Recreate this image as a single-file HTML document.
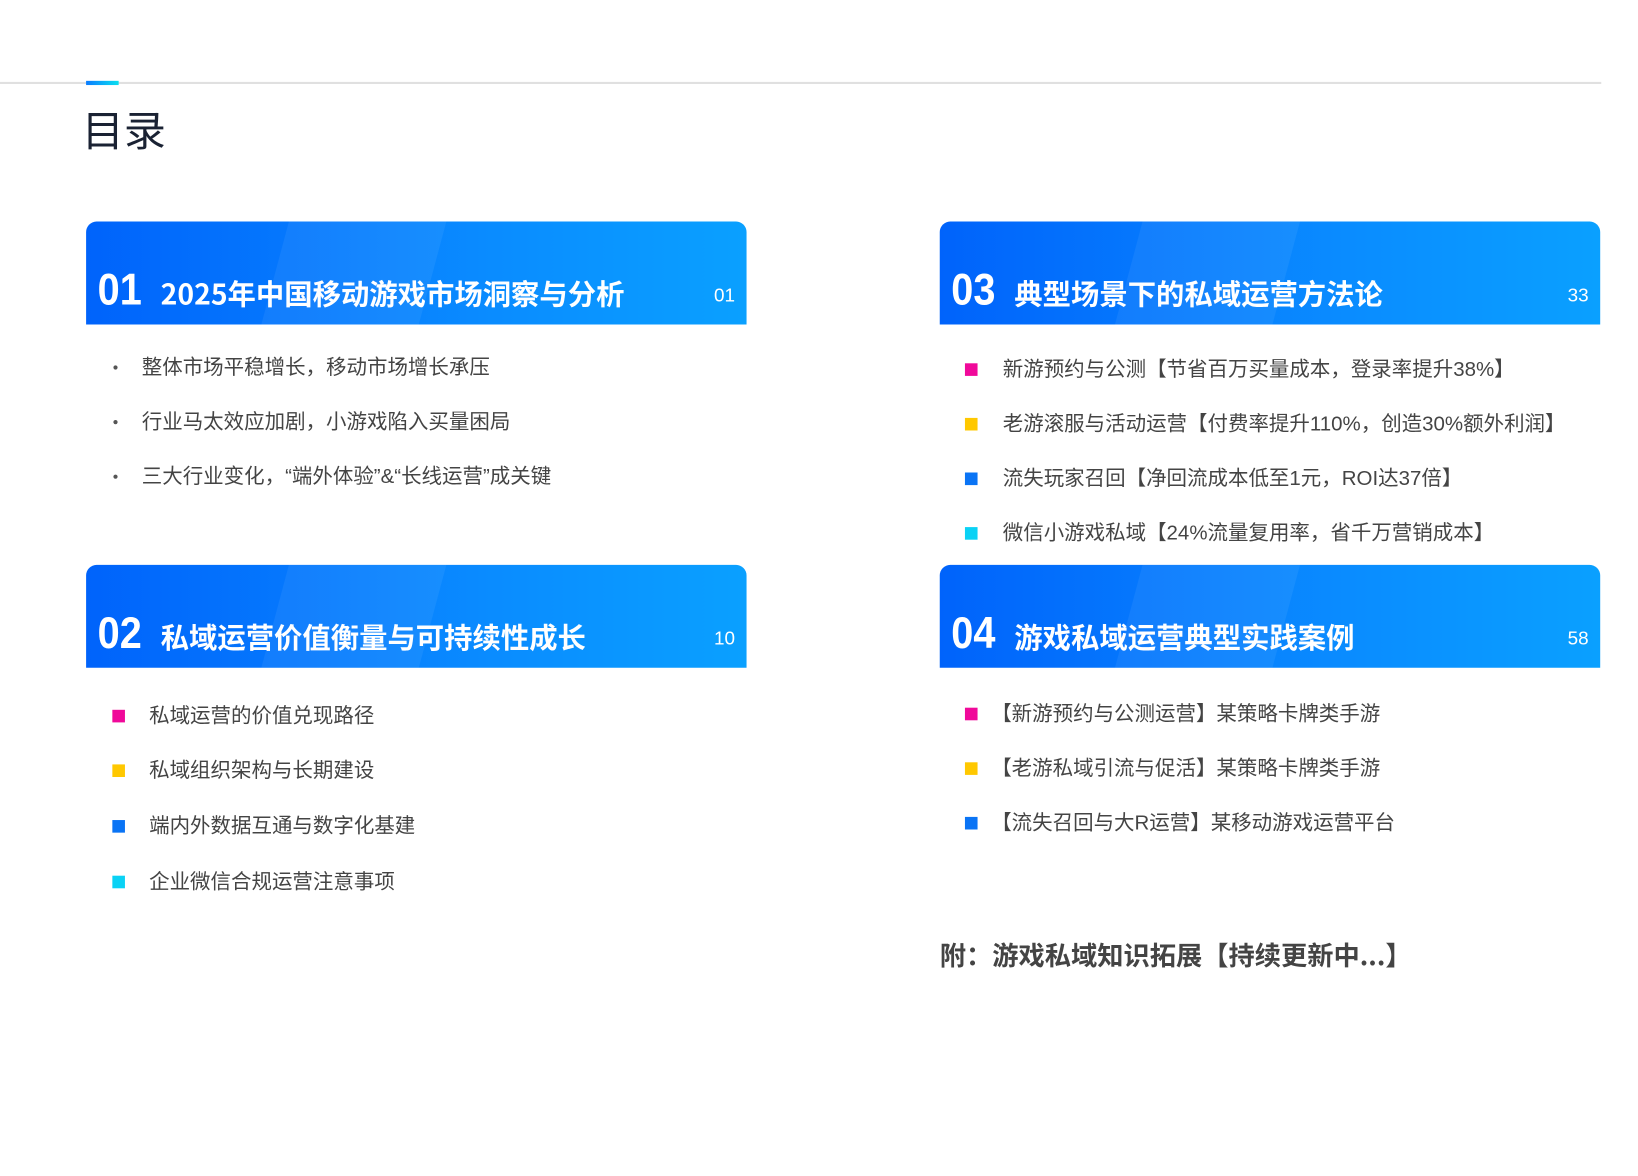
<!DOCTYPE html>
<html><head><meta charset="utf-8"><style>
*{margin:0;padding:0;box-sizing:border-box}
body{width:1638px;height:1176px;background:#fff;position:relative;font-family:"Liberation Sans","Noto Sans CJK SC",sans-serif;overflow:hidden}
#w{position:absolute;left:0;top:0;width:1560px;height:1120px;transform:scale(1.05);transform-origin:0 0}
.abs{position:absolute}
.box{position:absolute;width:629px;height:98px;border-radius:10px 10px 0 0;background:linear-gradient(90deg,#0063fb,#0a8bff 60%,#0aa0ff);overflow:hidden;color:#fff}
.box .n{position:absolute;left:11px;top:40px;font-size:42px;font-weight:bold;line-height:50px;transform:scaleX(.9);transform-origin:0 0}
.box .t{position:absolute;left:71px;top:48px;font-size:27px;font-weight:bold;line-height:40px;font-family:"Noto Sans CJK SC",sans-serif}
.box .p{position:absolute;right:11px;top:58px;font-size:18px;line-height:24px}
.box .s{position:absolute;background:rgba(255,255,255,.06);transform:skewX(-15deg)}
.it{position:absolute;font-size:19.5px;color:#444;line-height:26px;white-space:nowrap;font-family:"Liberation Sans","Noto Sans CJK SC",sans-serif}
.sq{position:absolute;width:12px;height:12px}
.dot{position:absolute;width:4px;height:4px;border-radius:50%;background:#555}
</style></head><body><div id="w">
<div class="abs" style="left:0;top:78px;width:1525px;height:2px;background:#e0e0e0"></div>
<div class="abs" style="left:82px;top:77px;width:31px;height:4px;background:linear-gradient(90deg,#0a7cff,#0ae0f0)"></div>
<div class="abs" style="left:78px;top:96px;font-size:40px;line-height:52px;color:#1a2233;font-family:'Noto Sans CJK SC',sans-serif">目录</div>

<div class="box" style="left:82px;top:211px"><div class="s" style="left:180px;top:0;width:150px;height:98px"></div><div class="n">01</div><div class="t">2025年中国移动游戏市场洞察与分析</div><div class="p">01</div></div>
<div class="box" style="left:895px;top:211px"><div class="s" style="left:180px;top:0;width:150px;height:98px"></div><div class="n">03</div><div class="t">典型场景下的私域运营方法论</div><div class="p">33</div></div>
<div class="box" style="left:82px;top:538px"><div class="s" style="left:180px;top:0;width:150px;height:98px"></div><div class="n">02</div><div class="t">私域运营价值衡量与可持续性成长</div><div class="p">10</div></div>
<div class="box" style="left:895px;top:538px"><div class="s" style="left:180px;top:0;width:150px;height:98px"></div><div class="n">04</div><div class="t">游戏私域运营典型实践案例</div><div class="p">58</div></div>

<div class="dot" style="left:108px;top:348px"></div><div class="it" style="left:135px;top:337px">整体市场平稳增长，移动市场增长承压</div>
<div class="dot" style="left:108px;top:400px"></div><div class="it" style="left:135px;top:389px">行业马太效应加剧，小游戏陷入买量困局</div>
<div class="dot" style="left:108px;top:452px"></div><div class="it" style="left:135px;top:441px">三大行业变化，“端外体验”&amp;“长线运营”成关键</div>

<div class="sq" style="left:919px;top:346px;background:#f0099a"></div><div class="it" style="left:955px;top:339px">新游预约与公测【节省百万买量成本，登录率提升38%】</div>
<div class="sq" style="left:919px;top:398px;background:#ffc800"></div><div class="it" style="left:955px;top:391px">老游滚服与活动运营【付费率提升110%，创造30%额外利润】</div>
<div class="sq" style="left:919px;top:450px;background:#0a74f5"></div><div class="it" style="left:955px;top:443px">流失玩家召回【净回流成本低至1元，ROI达37倍】</div>
<div class="sq" style="left:919px;top:502px;background:#0ad2f5"></div><div class="it" style="left:955px;top:495px">微信小游戏私域【24%流量复用率，省千万营销成本】</div>

<div class="sq" style="left:107px;top:676px;background:#f0099a"></div><div class="it" style="left:142px;top:669px">私域运营的价值兑现路径</div>
<div class="sq" style="left:107px;top:728px;background:#ffc800"></div><div class="it" style="left:142px;top:721px">私域组织架构与长期建设</div>
<div class="sq" style="left:107px;top:781px;background:#0a74f5"></div><div class="it" style="left:142px;top:774px">端内外数据互通与数字化基建</div>
<div class="sq" style="left:107px;top:834px;background:#0ad2f5"></div><div class="it" style="left:142px;top:827px">企业微信合规运营注意事项</div>

<div class="sq" style="left:919px;top:674px;background:#f0099a"></div><div class="it" style="left:944px;top:667px">【新游预约与公测运营】某策略卡牌类手游</div>
<div class="sq" style="left:919px;top:726px;background:#ffc800"></div><div class="it" style="left:944px;top:719px">【老游私域引流与促活】某策略卡牌类手游</div>
<div class="sq" style="left:919px;top:778px;background:#0a74f5"></div><div class="it" style="left:944px;top:771px">【流失召回与大R运营】某移动游戏运营平台</div>

<div class="abs" style="left:895px;top:892px;font-size:25px;font-weight:bold;color:#444;line-height:34px;font-family:'Noto Sans CJK SC',sans-serif">附：游戏私域知识拓展【持续更新中...】</div>
</div></body></html>
